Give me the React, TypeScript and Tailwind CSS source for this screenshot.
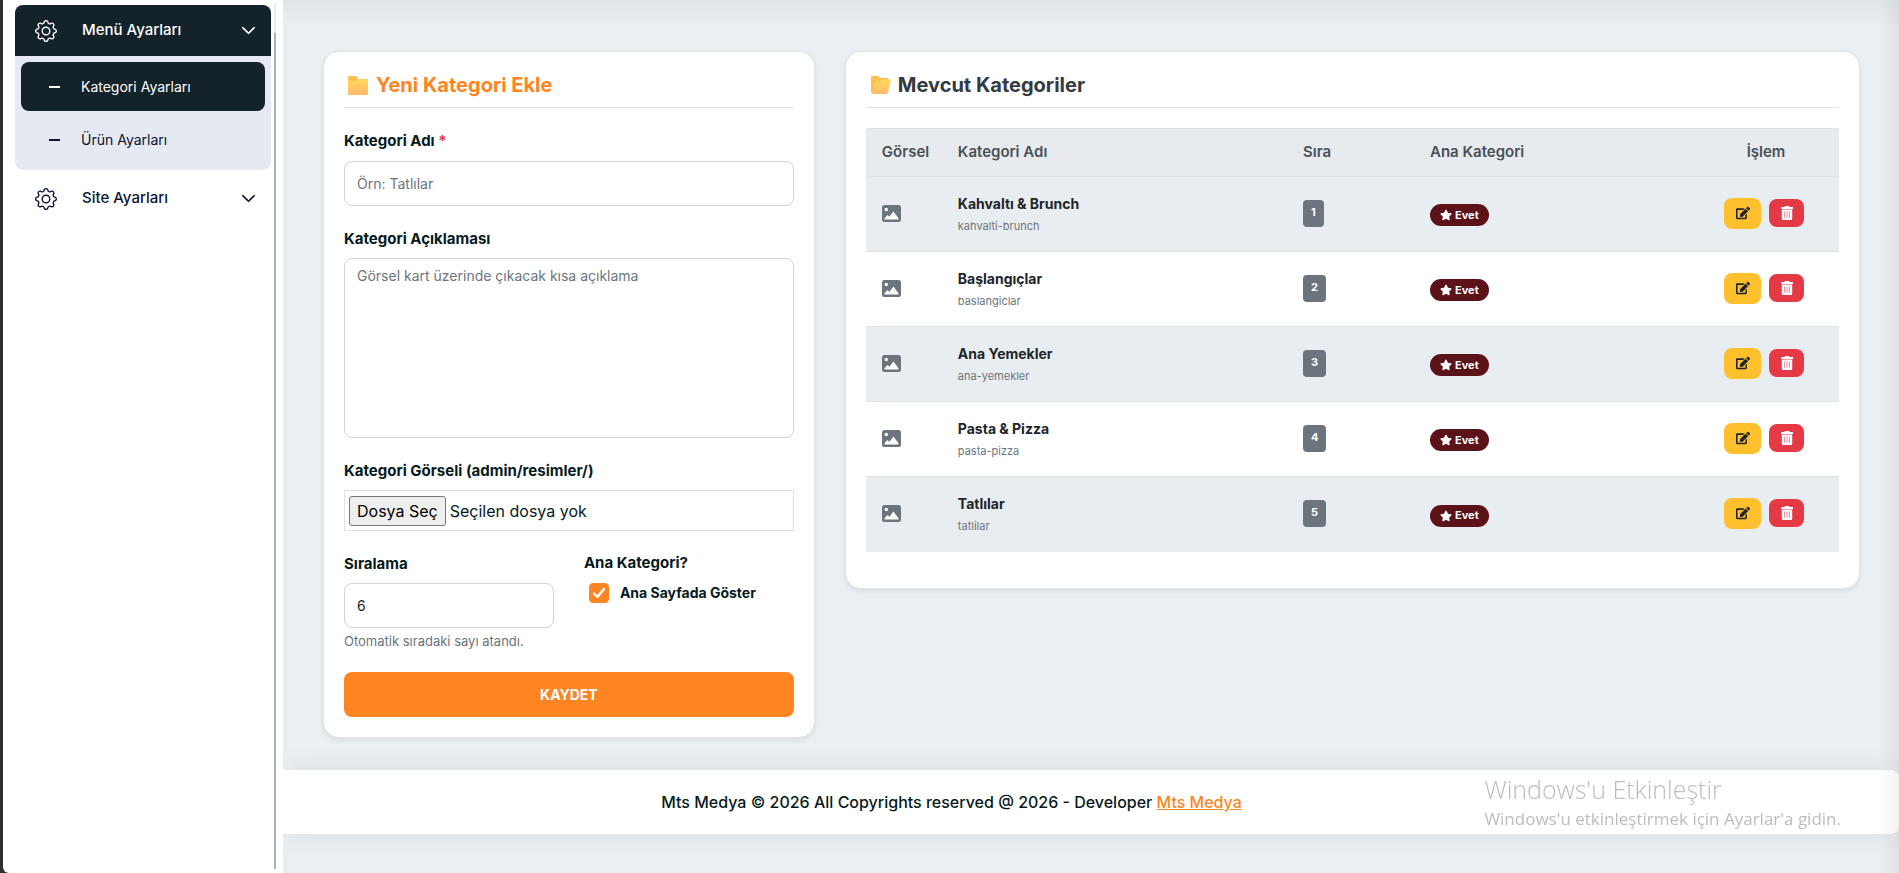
import React, { useState } from 'react'
import { BsGear, BsChevronDown } from 'react-icons/bs'
import { FaEdit, FaStar } from 'react-icons/fa'

const CATEGORIES = [
  { name: 'Kahvaltı & Brunch', slug: 'kahvalti-brunch', order: 1 },
  { name: 'Başlangıçlar', slug: 'baslangiclar', order: 2 },
  { name: 'Ana Yemekler', slug: 'ana-yemekler', order: 3 },
  { name: 'Pasta & Pizza', slug: 'pasta-pizza', order: 4 },
  { name: 'Tatlılar', slug: 'tatlilar', order: 5 },
]

const CARD = 'bg-white rounded-2xl border border-[#dfe4e8] shadow-[0_2px_5px_rgba(0,0,0,0.08)]'
const LABEL = 'block mb-[9px] text-[15px] leading-5 font-bold text-[#061a20]'
const FIELD = 'block w-full rounded-lg border border-[#ced4da] bg-white px-3 text-sm text-[#212529] placeholder:text-[#6c757d] outline-none'

function FolderIcon() {
  return (
    <svg viewBox="0 0 20 19" className="w-5 h-[19px]" aria-hidden="true">
      <defs>
        <linearGradient id="folder" x1="0" y1="0" x2="0" y2="1">
          <stop offset="0" stopColor="#ffd95e" />
          <stop offset="1" stopColor="#ffb86a" />
        </linearGradient>
      </defs>
      <path d="M1 0h6.5q.7 0 1.2.6L10.5 3H19q1 0 1 1v4H0V1q0-1 1-1z" fill="#fec152" />
      <path d="M0 5h8l2.5-1.5H20V18q0 1-1 1H1q-1 0-1-1z" fill="url(#folder)" />
    </svg>
  )
}

function OpenFolderIcon() {
  return (
    <svg viewBox="0 0 20 18" className="w-5 h-[18px]" aria-hidden="true">
      <defs>
        <linearGradient id="folder-open" x1="0" y1="0" x2="0" y2="1">
          <stop offset="0" stopColor="#ffd95e" />
          <stop offset="1" stopColor="#ffb86a" />
        </linearGradient>
      </defs>
      <path d="M1 0h5.5q.8 0 1.2.6L9 2h7.5q1 0 1 1v4L4 17H1q-1 0-1-1V1q0-1 1-1z" fill="#fdc04f" />
      <path d="M6.2 5h3l1.5-1.5h8.300q1.200 0 .9 1.200L16.800 17q-.3 1-1.300 1H1.200L4.800 6q.4-1 1.400-1z" fill="url(#folder-open)" />
    </svg>
  )
}

function PictureIcon() {
  return (
    <svg viewBox="0 0 19 17" className="w-[19px] h-[17px] text-[#6c757d]" role="img" aria-label="Görsel">
      <rect width="19" height="17" rx="2.5" fill="currentColor" />
      <circle cx="4.3" cy="4.5" r="1.7" fill="#fff" />
      <path d="M2.5 14.5v-1.300l3-3.200 1.900 1.700 4-5.200 5.100 6.800v1.200z" fill="#fff" />
    </svg>
  )
}

function TrashIcon() {
  return (
    <svg viewBox="0 0 12 14" className="h-3.5 w-3" aria-hidden="true">
      <path d="M4 0h4l.6 1H12v1.900H0V1h3.400z" fill="currentColor" />
      <path d="M.8 3.600h10.400V12.500q0 1.500-1.500 1.500H2.300Q.8 14 .8 12.500z" fill="currentColor" />
      <path d="M3.600 5.500v6.300M6 5.500v6.300M8.400 5.500v6.300" stroke="#e63946" strokeWidth=".8" strokeOpacity=".75" />
    </svg>
  )
}

function Sidebar() {
  return (
    <aside className="sticky top-0 z-10 h-screen w-[283px] shrink-0 bg-[#2e2e2e] pl-[3px]">
      <div className="flex h-full rounded-bl-md bg-white">
        <nav className="flex-1 pt-[5px] pl-3 pr-[3px] text-[15px] font-medium">
          <button type="button" className="flex h-[51px] w-full items-center rounded-t-lg bg-[#14232a] pl-5 pr-[15px] text-white">
            <BsGear size={22} />
            <span className="ml-[25px] flex-1 text-left">Menü Ayarları</span>
            <BsChevronDown size={15} className="stroke-1" />
          </button>
          <div className="space-y-1 rounded-b-lg bg-[#e5eaf2] p-1.5 text-sm font-normal">
            <a href="#kategori" className="flex h-[49px] items-center rounded-lg bg-[#14232a] pl-7 text-white">
              <span className="mr-[21px] h-0.5 w-[11px] bg-white" />
              Kategori Ayarları
            </a>
            <a href="#urun" className="flex h-[49px] items-center rounded-lg pl-7 text-[#0b1430]">
              <span className="mr-[21px] h-0.5 w-[11px] bg-[#0b1430]" />
              Ürün Ayarları
            </a>
          </div>
          <button type="button" className="mt-[3px] flex h-[51px] w-full items-center pl-5 pr-[15px] text-[#0b1430]">
            <BsGear size={22} />
            <span className="ml-[25px] flex-1 text-left">Site Ayarları</span>
            <BsChevronDown size={15} className="stroke-1" />
          </button>
        </nav>
        {/* scroll track */}
        <div className="mt-[3px] mr-[7px] mb-1 flex w-0.5 flex-col bg-[#ebebeb] pt-[30px]">
          <div className="flex-1 bg-[#b0b0b0]" />
        </div>
      </div>
    </aside>
  )
}

function CategoryForm() {
  const [order, setOrder] = useState('6')
  const [showHome, setShowHome] = useState(true)

  return (
    <section className={`${CARD} w-[32%] shrink-0 p-5`}>
      <h2 className="mb-[23px] flex items-center gap-2 border-b border-[#dee2e6] pb-[9px] pl-1 text-xl leading-[26px] font-bold text-[#ff8522]">
        <FolderIcon />
        Yeni Kategori Ekle
      </h2>
      <form onSubmit={e => e.preventDefault()}>
        <div className="mb-[23px]">
          <label htmlFor="name" className="mb-2.5 block text-[15px] leading-5 font-bold text-[#061a20]">
            Kategori Adı <span className="text-[#e63946]">*</span>
          </label>
          <input id="name" type="text" placeholder="Örn: Tatlılar" className={`${FIELD} h-[45px]`} />
        </div>

        <div className="mb-[23px]">
          <label htmlFor="desc" className={LABEL}>Kategori Açıklaması</label>
          <textarea id="desc" placeholder="Görsel kart üzerinde çıkacak kısa açıklama" className={`${FIELD} h-[180px] resize-none py-1.5 leading-[21px]`} />
        </div>

        <div className="mb-[23px]">
          <label htmlFor="image" className={LABEL}>Kategori Görseli (admin/resimler/)</label>
          <label className="flex h-[41px] items-center gap-1 border border-[#dee2e6] px-1 text-base text-[#061a20]">
            <input id="image" type="file" className="sr-only" />
            <span className="rounded-[3px] border border-[#767676] bg-[#efefef] px-[7px] py-0.5 text-black">Dosya Seç</span>
            Seçilen dosya yok
          </label>
        </div>

        <div className="mb-5 grid grid-cols-2 gap-[30px]">
          <div>
            <label htmlFor="order" className={LABEL}>Sıralama</label>
            <input id="order" type="number" value={order} onChange={e => setOrder(e.target.value)} className={`${FIELD} h-[45px]`} />
            <p className="mt-[3px] mb-px text-[13px] leading-5 whitespace-nowrap text-[#6c757d]">Otomatik sıradaki sayı atandı.</p>
          </div>
          <div className="text-[#061a20]">
            <p className="mb-3 text-[15px] leading-[17px] font-bold">Ana Kategori?</p>
            <label className="flex items-center gap-[11px] pl-[5px] text-sm leading-5 font-bold">
              <span className="grid size-5 place-items-center">
                <input
                  type="checkbox"
                  checked={showHome}
                  onChange={e => setShowHome(e.target.checked)}
                  className="col-start-1 row-start-1 size-5 appearance-none rounded border border-[#ced4da] checked:border-[#ff8522] checked:bg-[#ff8522]"
                />
                {showHome && (
                  <svg viewBox="0 0 20 20" className="pointer-events-none col-start-1 row-start-1 size-5" fill="none" stroke="#fff" strokeWidth="2.4" strokeLinecap="round" strokeLinejoin="round">
                    <path d="M5 10.5l3.400 3.500 6.600-8" />
                  </svg>
                )}
              </span>
              Ana Sayfada Göster
            </label>
          </div>
        </div>

        <button type="submit" className="block h-[45px] w-full rounded-lg bg-[#ff8522] text-sm font-bold text-white">
          KAYDET
        </button>
      </form>
    </section>
  )
}

function CategoryTable() {
  return (
    <section className={`${CARD} min-w-0 flex-1 px-5 pt-5 pb-9`}>
      <h2 className="mb-5 flex items-center gap-[7px] border-b border-[#dee2e6] pb-[9px] pl-[5px] text-xl leading-[26px] font-bold text-[#343a40]">
        <OpenFolderIcon />
        Mevcut Kategoriler
      </h2>
      <table className="w-full table-fixed border-collapse text-left">
        <thead>
          <tr className="h-12 border-y border-[#dee2e6] bg-[#e7ebee] text-[15px] text-[#495057]">
            <th className="w-[78px] pl-4 font-semibold">Görsel</th>
            <th className="pl-3.5 font-semibold">Kategori Adı</th>
            <th className="w-32 pl-4 font-semibold">Sıra</th>
            <th className="w-[278px] pl-[15px] font-semibold">Ana Kategori</th>
            <th className="w-[146px] text-center font-semibold">İşlem</th>
          </tr>
        </thead>
        <tbody>
          {CATEGORIES.map(cat => (
            <tr key={cat.slug} className="h-[75px] border-b border-[#dee2e6] odd:bg-[#e8edf1] last:border-b-0">
              <td className="pb-0.5 pl-4"><PictureIcon /></td>
              <td className="pl-3.5">
                <p className="text-sm leading-6 font-bold text-[#212529]">{cat.name}</p>
                <p className="text-[11px] leading-5 text-[#6c757d]">{cat.slug}</p>
              </td>
              <td className="pb-0.5 pl-4">
                <span className="inline-block rounded bg-[#6c757d] px-2 pt-[3px] pb-1.5 align-middle text-[11px] leading-[18px] font-bold text-white">{cat.order}</span>
              </td>
              <td className="pl-[15px]">
                <span className="inline-flex h-[22px] items-center gap-[3px] rounded-full bg-[#5c1219] px-2.5 align-middle text-[11px] font-bold text-white">
                  <FaStar size={12} />
                  Evet
                </span>
              </td>
              <td className="pb-0.5">
                <div className="flex items-center justify-center gap-2 pr-1">
                  <button type="button" aria-label="Düzenle" className="grid h-[31px] w-[37px] place-items-center rounded-lg bg-[#ffc02e] text-[#212529]">
                    <FaEdit size={14} />
                  </button>
                  <button type="button" aria-label="Sil" className="grid h-7 w-[35px] place-items-center rounded-lg bg-[#e63946] text-white">
                    <TrashIcon />
                  </button>
                </div>
              </td>
            </tr>
          ))}
        </tbody>
      </table>
    </section>
  )
}

export default function App() {
  return (
    <div className="flex min-h-screen overflow-x-clip font-['Inter',sans-serif]">
      <Sidebar />
      <main className="min-w-0 flex-1 bg-[#eaeff3] bg-linear-[to_bottom,#dfe4e8,#eaeff3_26px]">
        <div className="flex items-start gap-[30px] pt-[51px] pr-[39px] pb-8 pl-10">
          <CategoryForm />
          <CategoryTable />
        </div>
        <footer className="flex h-16 items-center justify-center rounded-r-lg bg-white pr-[279px] font-medium text-[#061a20] shadow-[0_0_28px_rgba(0,0,0,0.08)]">
          <p>
            Mts Medya © 2026 All Copyrights reserved @ 2026 - Developer{' '}
            <a href="#mts" className="text-[#ff8522] underline">Mts Medya</a>
          </p>
        </footer>
      </main>

      {/* edge shadow of the closed right panel */}
      <div className="pointer-events-none fixed inset-y-0 right-0 w-5 bg-linear-to-r from-transparent to-black/5" />

      {/* activation notice */}
      <div className="pointer-events-none fixed right-[58px] bottom-[42px] font-['Open_Sans',sans-serif] text-[#bdbdbd]">
        <p className="text-[25px] leading-9 font-light">Windows'u Etkinleştir</p>
        <p className="text-[17px] leading-6">Windows'u etkinleştirmek için Ayarlar'a gidin.</p>
      </div>
    </div>
  )
}
